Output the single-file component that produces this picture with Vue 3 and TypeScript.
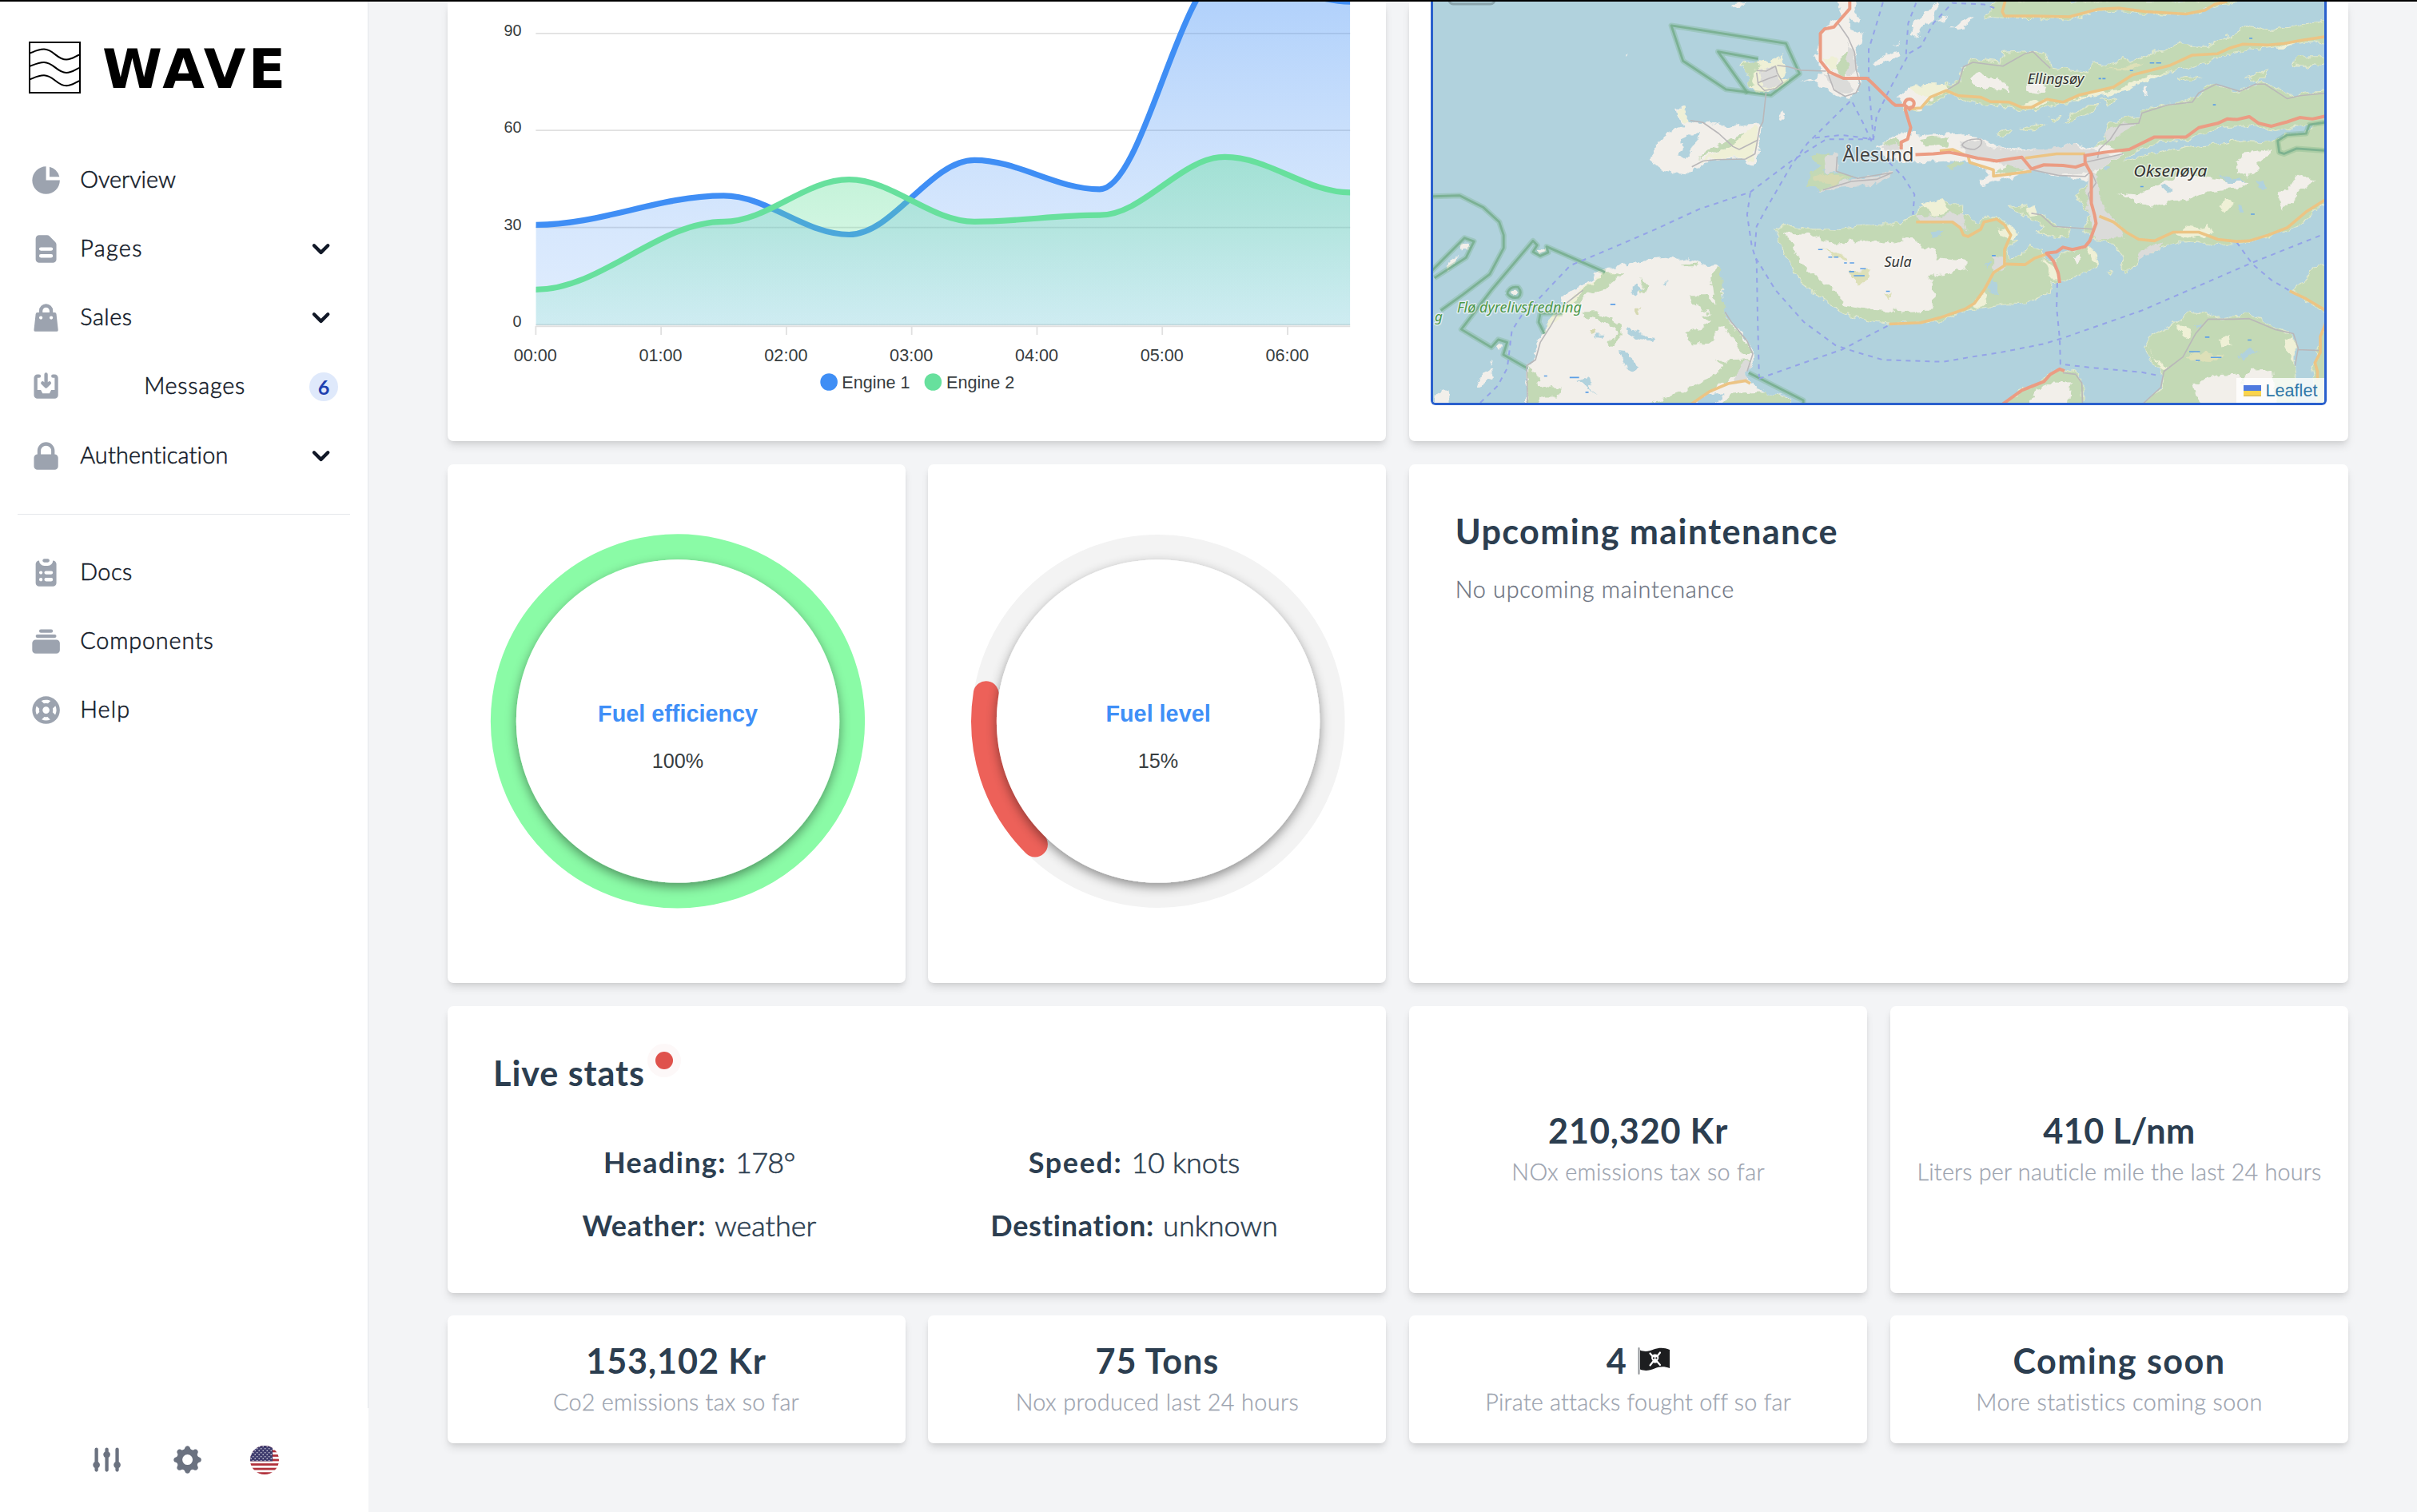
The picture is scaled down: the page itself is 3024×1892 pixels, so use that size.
<script setup lang="ts">
interface NavItem {
  label: string
  paths: string[]
  spacing: number
  chevron?: boolean
  badge?: number
}

interface Stat {
  title: string
  caption: string
  titleSpacing: number
  captionSpacing: number
  flag?: boolean
}

const chevronPath =
  'M5.293 7.293a1 1 0 011.414 0L10 10.586l3.293-3.293a1 1 0 111.414 1.414l-4 4a1 1 0 01-1.414 0l-4-4a1 1 0 010-1.414z'

const mainNav: NavItem[] = [
  {
    label: 'Overview',
    spacing: 0,
    paths: ['M2 10a8 8 0 018-8v8h8a8 8 0 11-16 0z', 'M12 2.252A8.014 8.014 0 0117.748 8H12V2.252z'],
  },
  {
    label: 'Pages',
    spacing: 1.35,
    chevron: true,
    paths: [
      'M4 4a2 2 0 012-2h4.586A2 2 0 0112 2.586L15.414 6A2 2 0 0116 7.414V16a2 2 0 01-2 2H6a2 2 0 01-2-2V4zm2 6a1 1 0 011-1h6a1 1 0 110 2H7a1 1 0 01-1-1zm1 3a1 1 0 100 2h6a1 1 0 100-2H7z',
    ],
  },
  {
    label: 'Sales',
    spacing: 0.5,
    chevron: true,
    paths: [
      'M10 2a4 4 0 00-4 4v1H5a1 1 0 00-.994.89l-1 9A1 1 0 004 18h12a1 1 0 00.994-1.11l-1-9A1 1 0 0015 7h-1V6a4 4 0 00-4-4zm2 5V6a2 2 0 10-4 0v1h4zm-6 3a1 1 0 112 0 1 1 0 01-2 0zm7-1a1 1 0 100 2 1 1 0 000-2z',
    ],
  },
  {
    label: 'Messages',
    spacing: 0.75,
    badge: 6,
    paths: [
      'M8.707 7.293a1 1 0 00-1.414 1.414l2 2a1 1 0 001.414 0l2-2a1 1 0 00-1.414-1.414L11 7.586V3a1 1 0 10-2 0v4.586l-.293-.293z',
      'M3 5a2 2 0 012-2h1a1 1 0 010 2H5v7h2l1 2h4l1-2h2V5h-1a1 1 0 110-2h1a2 2 0 012 2v10a2 2 0 01-2 2H5a2 2 0 01-2-2V5z',
    ],
  },
  {
    label: 'Authentication',
    spacing: 0.2,
    chevron: true,
    paths: ['M5 9V7a5 5 0 0110 0v2a2 2 0 012 2v5a2 2 0 01-2 2H5a2 2 0 01-2-2v-5a2 2 0 012-2zm8-2v2H7V7a3 3 0 016 0z'],
  },
]

const secondaryNav: NavItem[] = [
  {
    label: 'Docs',
    spacing: 0.5,
    paths: [
      'M9 2a1 1 0 000 2h2a1 1 0 100-2H9z',
      'M4 5a2 2 0 012-2 3 3 0 003 3h2a3 3 0 003-3 2 2 0 012 2v11a2 2 0 01-2 2H6a2 2 0 01-2-2V5zm3 4a1 1 0 000 2h.01a1 1 0 100-2H7zm3 0a1 1 0 000 2h3a1 1 0 100-2h-3zm-3 4a1 1 0 100 2h.01a1 1 0 100-2H7zm3 0a1 1 0 100 2h3a1 1 0 100-2h-3z',
    ],
  },
  {
    label: 'Components',
    spacing: 0.85,
    paths: [
      'M7 3a1 1 0 000 2h6a1 1 0 100-2H7zM4 7a1 1 0 011-1h10a1 1 0 110 2H5a1 1 0 01-1-1zM2 11a2 2 0 012-2h12a2 2 0 012 2v4a2 2 0 01-2 2H4a2 2 0 01-2-2v-4z',
    ],
  },
  {
    label: 'Help',
    spacing: 1.1,
    paths: [
      'M18 10a8 8 0 11-16 0 8 8 0 0116 0zm-2 0c0 .993-.241 1.929-.668 2.754l-1.524-1.525a3.997 3.997 0 00.078-2.183l1.562-1.562C15.802 8.249 16 9.1 16 10zm-5.165 3.913l1.58 1.58A5.98 5.98 0 0110 16a5.976 5.976 0 01-2.516-.552l1.562-1.562a4.006 4.006 0 001.789.027zm-4.677-2.796a4.002 4.002 0 01-.041-2.08l-.08.08-1.53-1.533A5.98 5.98 0 004 10c0 .954.223 1.856.619 2.657l1.54-1.54zm1.088-6.45A5.974 5.974 0 0110 4c.954 0 1.856.223 2.657.619l-1.54 1.54a4.002 4.002 0 00-2.346.033L7.246 4.668zM12 10a2 2 0 11-4 0 2 2 0 014 0z',
    ],
  },
]

const slidersPath =
  'M5 4a1 1 0 00-2 0v7.268a2 2 0 000 3.464V16a1 1 0 102 0v-1.268a2 2 0 000-3.464V4zM11 4a1 1 0 10-2 0v1.268a2 2 0 000 3.464V16a1 1 0 102 0V8.732a2 2 0 000-3.464V4zM16 3a1 1 0 011 1v7.268a2 2 0 010 3.464V16a1 1 0 11-2 0v-1.268a2 2 0 010-3.464V4a1 1 0 011-1z'
const cogPath =
  'M11.49 3.17c-.38-1.56-2.6-1.56-2.98 0a1.532 1.532 0 01-2.286.948c-1.372-.836-2.942.734-2.106 2.106.54.886.061 2.042-.947 2.287-1.561.379-1.561 2.6 0 2.978a1.532 1.532 0 01.947 2.287c-.836 1.372.734 2.942 2.106 2.106a1.532 1.532 0 012.287.947c.379 1.561 2.6 1.561 2.978 0a1.533 1.533 0 012.287-.947c1.372.836 2.942-.734 2.106-2.106a1.533 1.533 0 01.947-2.287c1.561-.379 1.561-2.6 0-2.978a1.532 1.532 0 01-.947-2.287c.836-1.372-.734-2.942-2.106-2.106a1.532 1.532 0 01-2.287-.947zM10 13a3 3 0 100-6 3 3 0 000 6z'

// Engine chart
const hour = 156.7
const originX = 669.8
const originY = 406.8
const unit = 4.047
const hours = [0, 1.5, 2.5, 3.5, 4.5, 5.5, 6.5]
const engine1 = [31, 40, 28, 51, 42, 109, 100]
const engine2 = [11, 32, 45, 32, 34, 52, 41]

function linePath(values: number[]): string {
  const pts = values.map((v, i) => [originX + hours[i] * hour, originY - v * unit])
  let d = `M${pts[0][0]} ${pts[0][1]}`
  for (let i = 1; i < pts.length; i++) {
    const [px, py] = pts[i - 1]
    const [x, y] = pts[i]
    const reach = (x - px) * 0.35
    d += ` C${px + reach} ${py} ${x - reach} ${y} ${x} ${y}`
  }
  return d
}

function areaPath(values: number[]): string {
  return `${linePath(values)} L${originX + 6.5 * hour} ${originY} L${originX} ${originY}Z`
}

const yTicks = [
  { value: 90, y: 41.8 },
  { value: 60, y: 163.2 },
  { value: 30, y: 284.7 },
  { value: 0, y: 406.4 },
]
const xTicks = [0, 1, 2, 3, 4, 5, 6].map((h) => ({ label: `0${h}:00`, x: originX + h * hour }))

// Radial gauges
const gauges = [
  { id: 'efficiency', label: 'Fuel efficiency', value: 100, color: '#8afba6', track: '#f2f2f2' },
  { id: 'level', label: 'Fuel level', value: 15, color: '#ed6159', track: '#f3f3f3' },
]
const gaugeCx = 288
const gaugeCy = 321.4
const gaugeR = 218

function gaugeArc(value: number): string {
  const at = (deg: number) => {
    const a = (deg * Math.PI) / 180
    return [gaugeCx + gaugeR * Math.sin(a), gaugeCy - gaugeR * Math.cos(a)]
  }
  const [x1, y1] = at(225)
  const [x2, y2] = at(225 + Math.min(value, 99.99) * 3.6)
  return `M${x1} ${y1} A${gaugeR} ${gaugeR} 0 ${value > 50 ? 1 : 0} 1 ${x2} ${y2}`
}

const live = [
  { name: 'Heading:', value: '178°', ns: 1.4, vs: -0.7 },
  { name: 'Speed:', value: '10 knots', ns: 1.6, vs: 0 },
  { name: 'Weather:', value: 'weather', ns: 0.8, vs: 0 },
  { name: 'Destination:', value: 'unknown', ns: 0.75, vs: 0 },
]

const stats: Stat[] = [
  { title: '210,320 Kr', caption: 'NOx emissions tax so far', titleSpacing: 0.85, captionSpacing: 0.37 },
  { title: '410 L/nm', caption: 'Liters per nauticle mile the last 24 hours', titleSpacing: 0.35, captionSpacing: 0.2 },
  { title: '153,102 Kr', caption: 'Co2 emissions tax so far', titleSpacing: 0.9, captionSpacing: 0.24 },
  { title: '75 Tons', caption: 'Nox produced last 24 hours', titleSpacing: 0.9, captionSpacing: 0.38 },
  { title: '4', caption: 'Pirate attacks fought off so far', titleSpacing: 0, captionSpacing: 0.22, flag: true },
  { title: 'Coming soon', caption: 'More statistics coming soon', titleSpacing: 1.4, captionSpacing: 0.47 },
]

// Map layers, west half
const westLand = [
  'M738 550L760 520 770 490 800 460 820 445 850 435 828 400 825 372 852 370 855 395 870 415 900 425 930 418 960 430 1000 437 1050 428 1090 425 1098 440 1092 480 1085 530 1065 575 1055 570 1040 545 1000 548 950 550 920 562 890 580 865 597 810 590 770 580Z',
  'M1330 0L1392 0 1390 40 1410 75 1400 85 1370 60 1380 100 1418 120 1410 150 1395 170 1395 230 1408 290 1395 320 1365 340 1335 330 1310 310 1285 305 1280 280 1265 270 1290 255 1280 235 1262 195 1275 190 1280 110 1300 90 1330 75 1350 55Z',
  'M345 1400L350 1340 350 1260 375 1240 385 1190 400 1150 440 1100 465 1050 460 1040 490 1000 540 975 600 925 640 918 700 905 750 890 790 886 830 895 870 890 920 915 960 910 965 960 975 1000 970 1050 985 1090 1010 1120 1040 1160 1065 1200 1065 1250 1050 1285 1060 1320 1100 1350 1180 1370 1205 1400Z',
  'M1003 12L1050 8 1035 20 1010 25Z',
  'M1150 390L1165 380 1168 395 1155 410Z',
  'M145 840L160 835 165 850 152 865Z',
  'M95 920L135 880 125 905 98 928Z',
  'M385 865L415 855 410 870 390 880Z',
  'M300 1005L315 1000 325 1010 312 1022Z',
  'M195 1330L210 1290 240 1270 245 1300 220 1320Z',
  'M230 1250L245 1245 238 1258Z',
  'M255 1190L275 1180 272 1198 258 1200Z',
  'M62 1400L66 1360 90 1340 108 1350 112 1400Z',
  'M1450 220L1480 195 1530 178 1525 195 1490 210 1460 225Z',
  'M1515 155L1535 148 1525 158Z',
  'M663 186L676 183 670 192Z',
  'M1220 280L1265 272 1250 285Z',
]
const westScrub = [
  'M1025 222L1060 215 1090 210 1125 215 1168 185 1160 210 1175 240 1165 270 1180 275 1150 305 1115 318 1085 320 1060 300 1055 260 1035 235Z',
  'M830 375L852 372 855 395 868 415 850 425 828 395Z',
  'M890 560L940 535 990 500 1050 455 1075 435 1085 440 1080 500 1060 560 1040 543 960 545Z',
  'M1290 200L1330 190 1340 240 1310 250Z',
  'M465 1050L520 1000 590 945 640 935 560 990 520 1030 470 1080 420 1130 410 1120Z',
]
const westForest = [
  'M1030 225L1080 210 1090 235 1065 255 1080 300 1060 300 1055 260Z',
  'M895 545L930 520 980 490 1040 460 1030 475 975 510 930 535Z',
  'M1350 190L1375 170 1375 230 1350 280 1335 240Z',
  'M500 1045L530 1000 600 940 660 940 640 955 590 1000 550 1010 520 1045Z',
  'M715 958L735 985 728 1010 708 1010 720 990Z',
  'M520 1075L570 1075 610 1090 650 1120 655 1160 620 1195 598 1180 640 1155 630 1125 570 1100 530 1090Z',
  'M855 1145L910 1130 940 1110 905 1095 935 1080 880 1050 865 1020 920 1020 950 1050 935 940 960 920 973 960 972 1045 985 1090 1010 1130 1055 1190 1065 1220 1040 1220 1000 1160 975 1120 950 1150 930 1185 870 1185Z',
  'M730 1400L790 1370 850 1350 930 1300 980 1265 950 1245 1060 1240 1020 1290 960 1330 880 1390Z',
  'M355 1265L385 1290 390 1330 460 1340 450 1370 400 1370 370 1400 355 1380Z',
  'M1250 540L1310 525 1325 560 1290 590 1380 600 1370 620 1290 655 1240 640 1250 600 1280 570Z',
  'M960 1400L1000 1360 1100 1350 1180 1372 1200 1400Z',
  'M840 910L890 905 890 918 850 918Z',
]
const westWater = [
  'M840 480L870 465 900 460 895 480 880 500 870 525 850 548 835 535 845 510Z',
  'M685 990L705 985 715 1000 700 1018 685 1008Z',
  'M670 1130L700 1140 730 1160 760 1165 750 1182 720 1175 680 1155Z',
  'M648 1212L665 1215 680 1235 710 1262 685 1283 668 1275 660 1245Z',
  'M515 1310L550 1298 555 1315 540 1330 575 1362 535 1335Z',
  'M900 1375L940 1355 975 1350 975 1370 940 1400 890 1400Z',
  'M570 1155L598 1157 590 1165 572 1162Z',
  'M780 975L800 973 790 983Z',
]
const westUrban = [
  'M1085 245L1110 240 1140 230 1145 260 1160 280 1125 305 1095 300Z',
  'M1370 150L1390 165 1395 240 1380 265 1365 260Z',
  'M1290 260L1320 300 1350 325 1390 310 1380 280 1320 250Z',
  'M1015 1290L1045 1245 1063 1250 1050 1285 1055 1310 1010 1315Z',
  'M1295 540L1335 530 1340 590 1300 590Z',
  'M1380 615L1450 608 1510 590 1500 615 1460 635 1270 660 1330 635Z',
]
const westHeath = [
  'M1260 610L1300 595 1365 612 1320 638 1270 630Z',
  'M695 1065L710 1065 705 1085 695 1080Z',
  'M550 1135L570 1135 572 1148 555 1155Z',
]

// Map layers, east half
const eastForest = [
  'M300 0L1060 0 1000 15 940 42 850 52 760 44 700 38 620 42 530 66 420 62 320 62 262 58Z',
  'M10 315L60 295 140 290 180 280 190 240 215 205 310 215 320 180 400 175 440 180 480 235 590 250 600 210 640 230 700 200 720 215 800 180 880 150 925 160 960 160 1040 120 1090 90 1150 105 1250 90 1350 65 1350 150 1280 145 1200 160 1100 170 1040 185 960 215 850 245 760 280 690 315 600 330 520 355 450 370 400 380 340 370 270 360 200 345 150 325 100 345 60 375 0 390Z',
  'M640 480L650 430 690 410 750 400 770 375 820 365 900 350 930 330 980 290 1070 315 1130 285 1180 300 1230 330 1350 310 1350 425 1290 430 1180 450 1100 430 1000 440 950 465 890 485 800 490 720 530 700 555 800 530 900 505 1000 495 1060 485 1130 490 1190 480 1215 460 1275 465 1300 430 1350 420 1350 690 1250 780 1200 800 1090 835 990 845 900 830 820 850 800 870 760 880 740 905 720 935 690 930 700 880 670 840 610 825 570 790 595 740 560 690 550 670 580 640 600 620 580 600 570 540Z',
  'M-403 790L-368 775 -283 790 -203 790 -143 780 -73 770 -43 772 -23 765 -10 780 10 760 40 740 50 720 120 690 190 710 190 740 240 765 290 740 330 770 350 800 340 830 370 830 330 850 340 890 380 880 400 850 440 860 440 885 480 900 500 870 530 860 590 850 610 870 622 920 570 945 500 970 470 975 465 1010 420 1030 390 1050 330 1045 250 1060 200 1070 140 1100 60 1115 -43 1115 -93 1110 -163 1090 -213 1065 -283 1010 -328 970 -353 920 -378 870 -393 820Z',
  'M750 1400L820 1340 830 1290 790 1250 765 1200 780 1160 840 1130 880 1100 910 1075 960 1080 1000 1100 1060 1090 1075 1075 1130 1100 1180 1130 1230 1150 1245 1180 1235 1250 1245 1320 1240 1400Z',
  'M1230 1000L1280 960 1300 920 1350 912 1350 1080 1300 1050Z',
  'M1350 1120L1325 1150 1310 1240 1295 1260 1310 1400 1350 1400Z',
  'M320 1400L380 1340 430 1320 460 1290 500 1270 550 1285 570 1320 572 1400Z',
  'M1235 215L1250 195 1350 195 1350 220 1320 225 1280 235Z',
  'M870 268L900 260 940 270 910 282Z',
  'M1090 270L1160 238 1150 260 1120 285Z',
  'M515 425L530 395 590 362 618 362 600 385 550 410Z',
  'M300 460L320 440 350 455 325 470Z',
  'M378 445L430 425 450 435 410 452Z',
  'M630 345L660 335 675 345 650 358Z',
  'M330 715L390 705 405 730 440 735 480 775 530 790 520 820 440 810 420 800 450 780 410 755 390 740Z',
  'M648 935L662 938 655 948Z',
  'M470 408L500 398 480 415Z',
]
const eastLand = [
  'M-80 500L0 455 80 465 160 460 240 470 300 510 400 515 480 510 540 490 600 510 640 500 700 530 640 570 610 590 600 625 500 605 420 590 380 600 300 625 250 640 240 620 280 600 220 560 150 555 60 560 0 560 -60 540Z',
  'M-15 330L20 300 60 305 110 320 60 375 10 380Z',
  'M-375 805L-300 810 -230 835 -150 830 -50 820 30 820 60 850 100 860 110 890 200 900 200 925 140 945 80 950 100 1000 90 1070 0 1075 -100 1068 -180 1050 -230 990 -300 930 -345 860Z',
  'M210 265L240 250 270 270 300 270 340 300 330 312 270 300 230 300Z',
  'M390 290L460 300 450 320 400 315Z',
  'M680 665L740 670 800 640 880 600 960 610 1030 620 1095 625 1080 645 970 660 900 690 860 695 800 712 750 700Z',
  'M1055 560L1080 525 1165 515 1165 530 1120 560 1125 590 1090 610 1060 590Z',
  'M1185 665L1220 650 1250 600 1305 625 1250 660 1240 690 1200 730Z',
  'M920 1320L1000 1295 1060 1290 1080 1320 1100 1275 1170 1270 1180 1400 940 1400Z',
  'M400 1400L420 1345 480 1315 530 1318 525 1400Z',
  'M25 125L35 80 80 40 105 8 110 25 95 70 60 100 45 125Z',
  'M155 100L190 75 225 55 215 80 180 100Z',
  'M100 80L130 60 150 50 130 70Z',
  'M762 310L775 300 780 325 765 332Z',
  'M540 890L560 870 570 890 550 915Z',
]
const eastScrub = [
  'M20 300L80 290 140 290 150 310 100 335 50 330Z',
  'M370 365L450 338 470 350 400 375Z',
  'M520 348L600 322 690 305 760 270 850 240 820 255 700 318 600 335Z',
  'M860 810L920 770 950 790 970 770 985 810 920 820Z',
  'M1000 715L1030 685 1050 700 1020 735Z',
  'M440 890L480 920 495 960 470 960Z',
  'M585 850L605 860 622 915 600 900Z',
  'M220 1050L260 1010 265 1040 240 1060Z',
  'M865 1120L900 1125 915 1165 900 1175Z',
  'M770 1180L790 1220 840 1270 820 1275Z',
  'M1000 1165L1035 1155 1040 1185 1015 1200Z',
  'M1180 165L1240 138 1250 145 1210 165Z',
  'M300 790L340 780 365 800 340 830Z',
  'M390 720L420 710 430 740 400 745Z',
  'M1210 1170L1240 1165 1240 1250 1215 1200Z',
  'M60 700L130 690 150 730 90 740Z',
]
const eastUrban = [
  'M180 490L250 480 270 510 380 520 500 505 540 490 570 510 600 515 690 535 640 570 600 590 500 600 400 590 300 560 210 545Z',
  'M590 590L620 610 625 680 650 740 690 780 700 820 610 825 600 770 580 690Z',
  'M640 460L690 425 740 430 690 460 660 490Z',
  'M740 880L780 850 825 835 810 865 750 895Z',
  'M40 745L120 740 190 735 200 790 170 770 60 765Z',
  'M560 530L620 545 610 580 560 570Z',
  'M290 880L330 900 320 930 290 940Z',
  'M-70 500L-20 490 0 510 -30 540Z',
]
const eastInnerForest = [
  'M50 480L100 470 150 480 140 500 70 505Z',
  'M290 590L340 565 430 560 410 580 340 600Z',
  'M-60 490L-20 475 0 500 -30 505Z',
  'M140 570L170 555 190 570 160 580Z',
  'M-240 820L-180 825 -120 790 -60 780 -10 790 0 830 -50 840 -150 825 -220 832Z',
]
const eastWater = [
  'M820 640L835 635 850 650 840 660Z',
  'M1000 605L1040 610 1095 628 1040 628Z',
  'M1120 625L1145 620 1150 650 1130 652Z',
  'M1060 710L1080 710 1085 735 1068 735Z',
  'M280 960L300 970 300 1010 275 1010Z',
  'M635 570L660 575 650 590 635 582Z',
  'M925 1120L950 1110 940 1130 925 1130Z',
  'M1065 1225L1100 1200 1140 1215 1110 1215 1080 1235Z',
  'M85 800L130 795 120 815 95 820Z',
  'M260 900L275 905 270 925Z',
]
const ferries = [
  'M205 1388L260 1330 290 1270 295 1230 305 1140 340 1080 390 1030 490 915 600 865 750 795 900 720 1060 662 1190 555 1300 480 1450 480',
  'M1060 665L1050 740 1065 850 1080 900 1083 1080 1088 1300',
  'M1075 850L1080 780 1110 720 1190 570 1240 495 1380 345 1420 430 1445 490',
  'M1078 890L1140 1000 1230 1110 1330 1190 1400 1215 1480 1240 1670 1247 1760 1230 1850 1215 1990 1185 2050 1165 2300 1070 2650 905 2880 805',
  'M1088 1305L1230 1250 1350 1205 1500 1120',
  'M1265 475L1350 465 1450 480 1460 400 1500 310 1540 230 1560 190',
  'M1480 8L1455 100 1435 170 1435 290 1450 480',
  'M1585 10L1560 80 1553 190 1600 160 1640 80 1700 10 1800 15 1840 30',
  'M1500 560L1545 610 1580 670 1575 740',
  'M2032 975L2030 1060 2040 1170 2042 1255 2150 1268 2300 1283 2355 1295',
  'M2600 835L2650 910 2710 965 2765 1000',
]
const redRoads = [
  'M1375 0L1375 30 1335 80 1325 93 1295 100 1282 115 1282 210 1310 248 1355 270 1430 270 1445 285 1510 355 1520 363 1550 363 1568 380',
  'M1550 375L1568 440 1558 480 1538 490 1538 515',
  'M1548 360Q1550 340 1568 342 1585 350 1575 368 1560 375 1548 368',
  'M1583 533L1640 530 1690 525 1740 535 1780 545 1840 555 1880 548 1920 542 1950 582 1990 568 2050 570 2090 576 2120 565 2120 538',
  'M2115 537L2180 525 2260 515 2340 472 2440 472 2480 440 2540 425 2570 410 2600 412 2640 402 2670 425 2710 435 2760 420 2800 405 2840 410 2890 398',
  'M2120 560L2140 600 2140 700 2150 740 2155 770 2135 830 2120 850 2080 860 2050 852 2030 868 1998 872 2020 900 2035 940 2040 975',
  'M1850 1400L1920 1345 1990 1315 2010 1290 2040 1272 2055 1278',
]
const orangeRoads = [
  'M1868 0L1858 40 1865 55 1960 55 2070 58 2160 32 2230 28 2310 40 2440 48 2500 35 2530 15 2570 5',
  'M1568 375L1600 372 1630 335 1680 312 1720 330 1790 335 1820 350 1880 352 1920 370 1950 370 2000 342 2050 352 2100 328 2210 300 2270 258 2390 225 2460 190 2540 185 2580 165 2620 152 2700 155 2750 150 2800 140 2890 125',
  'M1740 535L1700 515 1660 520',
  'M1750 540L1755 560 1830 585 1830 607 1950 590',
  'M1930 545L2030 530 2120 530',
  'M1585 765L1700 765 1725 785 1735 810 1750 815 1790 790 1800 765 1840 755 1865 775 1885 810 1865 860 1865 915 1830 940 1800 1000 1770 1045 1740 1065 1660 1095 1600 1112 1500 1117',
  'M1865 910L1930 912 1960 890 2000 875',
  'M2165 745L2210 765 2250 800 2290 825 2340 830 2400 800 2480 800 2540 825 2600 832 2640 830 2700 810 2760 785 2820 730 2890 682',
  'M2768 1003L2820 1030 2890 1075 2880 1120 2865 1160 2865 1215 2848 1250 2856 1280 2856 1310',
  'M870 1395L930 1350 990 1322 1045 1312 1060 1322',
]
const greyRoads = [
  'M870 415L910 422 960 460 1005 505 1025 515 1085 482',
  'M875 575L910 555 950 550 1045 548 1075 530 1090 440 1100 420 1110 320',
  'M1080 250L1085 290 1105 312 1140 305 1163 285 1145 250 1140 228 1110 245 1080 243 M1085 285L1120 270 1145 260 M1145 225L1180 230 1220 242 1300 245',
  'M1335 75L1370 130 1390 180 1395 240 1408 290 1395 320 1360 332 1325 310 1305 250',
  'M355 1395L352 1260 380 1240 395 1180 430 1120 460 1060 530 1000',
  'M980 1075L1000 1110 1050 1175 1068 1220 1050 1280',
  'M1335 540L1332 590 1400 615 1450 605 1510 595 1460 618 1380 625 1290 655',
  'M1683 310L1720 285 1735 230 1765 215 1860 228 1930 185 1955 178 1985 210 2010 235',
  'M2160 545L2165 515 2200 480 2230 430 2290 425 2300 390 2380 362 2460 352 2480 320 2535 290 2610 315 2660 290 2690 290 2760 340 2800 330 2890 320',
  'M2120 560L2240 530 M1950 585L2040 605 2120 608 2140 590 2155 630 2130 670 2150 735',
  'M1950 735L1980 740 2020 780 2080 785 2150 790',
  'M2300 1395L2360 1335 2370 1280 2430 1230 2470 1150 2510 1100 2590 1100 2640 1098 2720 1135 2780 1150 2795 1200 2785 1260 M2795 1205L2865 1208',
  'M2050 1285L2090 1290 2110 1320 2112 1395',
  'M1730 500Q1745 475 1790 480 1800 500 1770 515 1740 515 1730 500',
]
const reserves = [
  'M810 88L1173 150 1216 254 1125 328 983 308 847 210Z',
  'M1085 203L958 178 1052 322',
  'M50 677L140 674 215 715 265 765 279 810 279 855 235 945 150 1015 80 1070',
  'M50 935L100 880 155 820 185 832 160 888 60 958',
  'M600 938L415 850 420 870 395 882 372 868 385 845 372 830 240 1000 145 1135 240 1197 262 1170 290 1180 278 1222 355 1270',
  'M290 1010Q300 985 325 990 340 1010 325 1025 300 1030 290 1010',
  'M465 1080L395 1080 390 1110 408 1150',
  'M1055 1285L1228 1380 1228 1400',
  'M2890 420L2830 430 2820 460 2760 465 2730 485 2735 525 2750 530 2790 512 2890 520',
]
const streams = [
  'M1275 860h14M1307 886h12M1325 886h14M1357 906h9M1375 906h14M1373 936h16M1408 926h18M1388 950h34M617 1049h16M488 1301h30M407 1296h10M538 1352h10M1490 1004h12',
  'M2325 217h14M2345 217h16M2163 271h8M2175 271h10M2262 243h10M2450 1212h34M2470 1242h14M2518 1232h34M2500 1162h14M2635 1172h12M2525 361h9M2640 132h10M1825 881h12M2295 643h10M2645 738h12',
]
</script>

<template>
  <div class="page">
    <div class="topline"></div>
    <div class="layout">
      <aside class="sidebar">
        <div class="menu">
          <a class="brand">
            <svg class="brand-mark" viewBox="0 0 65 65">
              <rect x="1" y="1" width="63" height="63" fill="none" stroke="#000" stroke-width="2" />
              <g fill="none" stroke="#000" stroke-width="2">
                <path d="M1 14.9C8 12 12 9.6 19 9.6C31 9.6 35 22.6 47 22.6C54 22.6 58 18.5 64 16.3" />
                <path d="M1 31.2C8 28.3 12 25.9 19 25.9C31 25.9 35 38.9 47 38.9C54 38.9 58 34.8 64 32.6" />
                <path d="M1 47.6C8 44.7 12 42.3 19 42.3C31 42.3 35 55.3 47 55.3C54 55.3 58 51.2 64 49" />
              </g>
            </svg>
            <span class="brand-name">WAVE</span>
          </a>

          <ul class="nav">
            <li v-for="item in mainNav" :key="item.label" class="nav-item">
              <svg class="icon" viewBox="0 0 20 20">
                <path v-for="p in item.paths" :key="p" :d="p" fill-rule="evenodd" clip-rule="evenodd" />
              </svg>
              <span
                class="nav-label"
                :class="{ centered: item.badge }"
                :style="{ letterSpacing: item.spacing + 'px' }"
                >{{ item.label }}</span
              >
              <svg v-if="item.chevron" class="icon chevron" viewBox="0 0 20 20">
                <path :d="chevronPath" fill-rule="evenodd" />
              </svg>
              <span v-if="item.badge" class="badge">{{ item.badge }}</span>
            </li>
          </ul>
          <ul class="nav nav-secondary">
            <li v-for="item in secondaryNav" :key="item.label" class="nav-item">
              <svg class="icon" viewBox="0 0 20 20">
                <path v-for="p in item.paths" :key="p" :d="p" fill-rule="evenodd" clip-rule="evenodd" />
              </svg>
              <span class="nav-label" :style="{ letterSpacing: item.spacing + 'px' }">{{ item.label }}</span>
            </li>
          </ul>
        </div>

        <div class="tools">
          <svg class="icon tool" viewBox="0 0 20 20"><path :d="slidersPath" /></svg>
          <svg class="icon tool" viewBox="0 0 20 20"><path :d="cogPath" fill-rule="evenodd" /></svg>
          <svg class="locale" viewBox="0 0 36 36">
            <defs>
              <clipPath id="locale-clip"><circle cx="18" cy="18" r="18" /></clipPath>
              <pattern id="stars" width="5" height="5" patternUnits="userSpaceOnUse">
                <circle cx="1.2" cy="1.2" r=".8" fill="#fff" />
                <circle cx="3.7" cy="3.7" r=".8" fill="#fff" />
              </pattern>
            </defs>
            <g clip-path="url(#locale-clip)">
              <rect width="36" height="36" fill="#fff" />
              <rect v-for="n in 7" :key="n" x="0" :y="(n - 1) * 5.54" width="36" height="2.77" fill="#b0303a" />
              <rect width="28" height="19.4" fill="#3f3c6e" />
              <rect width="28" height="19.4" fill="url(#stars)" opacity=".85" />
            </g>
          </svg>
        </div>
      </aside>

      <main class="grid">
        <section class="card wide open-top">
          <svg class="fill" viewBox="559.5 2 1174.3 550" preserveAspectRatio="none">
            <defs>
              <linearGradient id="fill-blue" gradientUnits="userSpaceOnUse" x1="0" y1="-34" x2="0" y2="407">
                <stop offset="0" stop-color="#3f8ef5" stop-opacity=".43" />
                <stop offset=".45" stop-color="#3f8ef5" stop-opacity=".28" />
                <stop offset=".72" stop-color="#3f8ef5" stop-opacity=".21" />
                <stop offset="1" stop-color="#3f8ef5" stop-opacity=".16" />
              </linearGradient>
              <linearGradient id="fill-green" gradientUnits="userSpaceOnUse" x1="0" y1="196" x2="0" y2="407">
                <stop offset="0" stop-color="#67e09d" stop-opacity=".42" />
                <stop offset=".42" stop-color="#67e09d" stop-opacity=".31" />
                <stop offset="1" stop-color="#72e8b4" stop-opacity=".16" />
              </linearGradient>
              <clipPath id="plot"><rect x="669.8" y="0" width="1018.4" height="420" /></clipPath>
            </defs>
            <g stroke="#e0e0e0" stroke-width="1.8">
              <line v-for="t in yTicks" :key="t.value" x1="669.8" x2="1688.2" :y1="t.y" :y2="t.y" />
              <line x1="669.8" x2="1688.2" y1="408.4" y2="408.4" />
              <line v-for="t in xTicks" :key="t.label" :x1="t.x" :x2="t.x" y1="408" y2="419" />
            </g>
            <g clip-path="url(#plot)" fill="none" stroke-width="7.2">
              <path :d="areaPath(engine1)" fill="url(#fill-blue)" />
              <path :d="linePath(engine1)" stroke="#3f8ef5" />
              <path :d="areaPath(engine2)" fill="url(#fill-green)" />
              <path :d="linePath(engine2)" stroke="#67e09d" />
            </g>
            <g class="axis y-axis">
              <text v-for="t in yTicks" :key="t.value" x="652" :y="t.y + 3">{{ t.value }}</text>
            </g>
            <g class="axis x-axis">
              <text v-for="t in xTicks" :key="t.label" :x="t.x - 0.5" y="452">{{ t.label }}</text>
            </g>
            <g class="axis legend">
              <circle cx="1036.4" cy="478" r="10.8" fill="#3f8ef5" />
              <text x="1052.5" y="485.6">Engine 1</text>
              <circle cx="1166.6" cy="478" r="10.8" fill="#67e09d" />
              <text x="1183.2" y="485.6">Engine 2</text>
            </g>
          </svg>
        </section>

        <section class="card wide open-top map-card">
          <div class="map">
            <svg class="fill" viewBox="1792 2 1116.5 502.6" preserveAspectRatio="none">
              <defs>
                <filter id="coast" x="-5%" y="-5%" width="110%" height="110%">
                  <feTurbulence type="fractalNoise" baseFrequency=".09" numOctaves="3" seed="4" />
                  <feDisplacementMap in="SourceGraphic" scale="11" xChannelSelector="R" yChannelSelector="G" />
                </filter>
              </defs>
              <rect x="1780" y="0" width="1140" height="520" fill="#b1d2dd" />
              <g filter="url(#coast)">
                <g transform="translate(1770 0) scale(.39541 .36352)">
                  <path v-for="d in westLand" :key="d" :d="d" fill="#f2efea" />
                  <path v-for="d in westScrub" :key="d" :d="d" fill="#eff0d6" />
                  <path v-for="d in westForest" :key="d" :d="d" fill="#c3d9b5" />
                  <path v-for="d in westUrban" :key="d" :d="d" fill="#dbdbd9" />
                  <path v-for="d in westHeath" :key="d" :d="d" fill="#d6d9b2" />
                  <path v-for="d in westWater" :key="d" :d="d" fill="#b1d2dd" />
                </g>
                <g transform="translate(2380 0) scale(.39541 .36352)">
                  <g stroke="#e2e9cd" stroke-width="3">
                    <path v-for="d in eastForest" :key="d" :d="d" fill="#c3d9b5" />
                  </g>
                  <path v-for="d in eastLand" :key="d" :d="d" fill="#f2efea" />
                  <path v-for="d in eastInnerForest" :key="d" :d="d" fill="#c3d9b5" />
                  <path v-for="d in eastScrub" :key="d" :d="d" fill="#eff0d6" />
                  <path v-for="d in eastUrban" :key="d" :d="d" fill="#dbdbd9" />
                  <path v-for="d in eastWater" :key="d" :d="d" fill="#b1d2dd" />
                  <path
                    d="M-260 855L-230 870 -180 885 -170 900 -230 880ZM-170 935L-100 930 -110 960 -140 985 -155 960ZM-55 1005L-35 1010 -45 1030ZM900 1240L920 1215 1020 1225 970 1245ZM640 240L720 225 760 222 740 240Z"
                    fill="#dde0b8"
                  />
                </g>
              </g>
              <g class="lines" transform="translate(1770 0) scale(.39541 .36352)">
                <path v-for="d in reserves" :key="d + 'w'" :d="d" stroke="#6fb07f" stroke-opacity=".3" stroke-width="7" />
                <path v-for="d in reserves" :key="d" :d="d" stroke="#75ad8c" stroke-opacity=".85" stroke-width="2.8" />
                <path v-for="d in ferries" :key="d" :d="d" stroke="#94a3e8" stroke-width="2" stroke-dasharray="6 6" />
                <path v-for="d in greyRoads" :key="d" :d="d" stroke="#b9b7b9" stroke-width="1.6" />
                <path v-for="d in orangeRoads" :key="d" :d="d" stroke="#ecc484" stroke-width="3.6" />
                <path v-for="d in redRoads" :key="d" :d="d" stroke="#eb9c83" stroke-width="4" />
                <path v-for="d in streams" :key="d" :d="d" stroke="#5c9fe6" stroke-width="1.6" />
              </g>
              <g class="places">
                <text x="2305" y="202" font-size="23.5" textLength="89" lengthAdjust="spacingAndGlyphs" class="town">Ålesund</text>
                <text x="2536" y="105" font-size="18" textLength="71" lengthAdjust="spacingAndGlyphs">Ellingsøy</text>
                <text x="2669" y="221" font-size="20.5" textLength="92" lengthAdjust="spacingAndGlyphs">Oksenøya</text>
                <text x="2357" y="334.5" font-size="17.5" textLength="34" lengthAdjust="spacingAndGlyphs">Sula</text>
                <text x="1822" y="391.5" font-size="17.5" textLength="156" lengthAdjust="spacingAndGlyphs" class="reserve">Flø dyrelivsfredning</text>
                <text x="1794" y="402" font-size="17" class="reserve">g</text>
              </g>
              <rect x="1812" y="-20" width="57" height="25" rx="5" fill="none" stroke="#000" stroke-opacity=".22" stroke-width="3" />
            </svg>
            <a class="attribution">
              <svg class="ua" viewBox="0 0 12 8" preserveAspectRatio="none">
                <path fill="#4f7adf" d="M0 0h12v4H0z" />
                <path fill="#fbd44b" d="M0 4h12v3H0z" />
                <path fill="#dfbb45" d="M0 7h12v1H0z" />
              </svg>
              <span>Leaflet</span>
            </a>
          </div>
        </section>

        <section v-for="g in gauges" :key="g.id" class="card">
          <svg class="fill" viewBox="0 0 572.9 649.2">
            <defs>
              <filter :id="'shade-' + g.id" x="-20%" y="-20%" width="140%" height="140%">
                <feDropShadow dx="0" dy="5" stdDeviation="7" flood-color="#000" flood-opacity=".42" />
              </filter>
            </defs>
            <circle :cx="gaugeCx" :cy="gaugeCy" :r="gaugeR" fill="none" :stroke="g.track" stroke-width="31" />
            <path :d="gaugeArc(g.value)" fill="none" :stroke="g.color" stroke-width="32" stroke-linecap="round" />
            <circle :cx="gaugeCx" :cy="gaugeCy" r="202.2" fill="#fff" :filter="`url(#shade-${g.id})`" />
            <text class="gauge-name" :x="gaugeCx" y="322">{{ g.label }}</text>
            <text class="gauge-value" :x="gaugeCx" y="380">{{ g.value }}%</text>
          </svg>
        </section>

        <section class="card wide panel">
          <h2 class="heading upcoming">Upcoming maintenance</h2>
          <p class="note">No upcoming maintenance</p>
        </section>

        <section class="card wide panel">
          <div class="live-head">
            <h2 class="heading">Live stats</h2>
            <span class="pulse"></span>
          </div>
          <div class="live-grid">
            <p v-for="l in live" :key="l.name" class="live-row">
              <strong :style="{ letterSpacing: l.ns + 'px' }">{{ l.name }}</strong>
              <span :style="{ letterSpacing: l.vs + 'px' }">{{ l.value }}</span>
            </p>
          </div>
        </section>

        <section v-for="s in stats" :key="s.title" class="card stat">
          <h2 class="stat-title" :style="{ letterSpacing: s.titleSpacing + 'px' }">
            {{ s.title }}
            <svg v-if="s.flag" class="pirate" viewBox="0 0 41 34">
              <path d="M1.5 1v32" stroke="#8b8f94" stroke-width="2" stroke-linecap="round" />
              <path d="M3 3.5C9 6 14 5 20 2.5C27 .2 33 0 40 3V26C33 23.5 27 24 21 26.5C15 29 9 30 3 27.5Z" fill="#1d1e20" />
              <path d="M15.500 7.500L28 22M28 6.500L15.500 22.500" stroke="#fff" stroke-width="2.2" stroke-linecap="round" />
              <circle cx="21.7" cy="13" r="4.6" fill="#fff" />
              <rect x="19.4" y="15.500" width="4.6" height="4" rx="1" fill="#fff" />
              <circle cx="20" cy="13.4" r="1.1" fill="#1d1e20" />
              <circle cx="23.4" cy="13.4" r="1.1" fill="#1d1e20" />
            </svg>
          </h2>
          <p class="stat-caption" :style="{ letterSpacing: s.captionSpacing + 'px' }">{{ s.caption }}</p>
        </section>
      </main>
    </div>
  </div>
</template>

<style>
body {
  background: #f3f4f6;
}
</style>

<style scoped>
.page {
  display: flex;
  flex-direction: column;
  width: 3024px;
  height: 1892px;
  overflow: hidden;
  background: #f3f4f6;
  font-family: Lato, 'Liberation Sans', sans-serif;
  color: #2c3e50;
}
h2,
p,
ul {
  margin: 0;
  padding: 0;
}
.topline {
  flex: none;
  height: 2px;
  background: #000;
}
.layout {
  display: flex;
  flex: 1;
  min-height: 0;
}

/* Sidebar */
.sidebar {
  display: flex;
  flex-direction: column;
  flex: none;
  width: 461px;
  background: #fff;
}
.menu {
  flex: 1;
  box-sizing: border-box;
  border-right: 1px solid #e5e7eb;
  padding: 50px 22px 0;
}
.brand {
  display: flex;
  align-items: flex-start;
  gap: 27px;
  height: 65px;
  padding-left: 14px;
}
.brand-mark {
  flex: none;
  width: 65px;
  height: 65px;
}
.brand-name {
  margin-top: 2px;
  font: 700 68px/65px 'DejaVu Sans', sans-serif;
  letter-spacing: 3.4px;
  color: #000;
}
.nav {
  display: flex;
  flex-direction: column;
  gap: 14.2px;
  margin-top: 72.5px;
  list-style: none;
}
.nav-secondary {
  margin-top: 37px;
  padding-top: 36px;
  border-top: 1px solid #e5e7eb;
}
.nav-item {
  display: flex;
  align-items: center;
  height: 72px;
  padding: 0 15px 0 14px;
}
.icon {
  flex: none;
  width: 43.2px;
  height: 43.2px;
  fill: #9ca3af;
}
.nav-label {
  flex: 1;
  margin-left: 21px;
  padding-bottom: 2px;
  font-size: 28.8px;
  font-weight: 300;
  line-height: 43.2px;
  color: #111827;
  -webkit-text-stroke: 0.55px currentColor;
}
.centered {
  text-align: center;
}
.chevron {
  fill: #111827;
}
.badge {
  display: flex;
  align-items: center;
  justify-content: center;
  width: 36px;
  height: 36px;
  border-radius: 50%;
  background: #dfe9fb;
  color: #1e40af;
  font-size: 25.2px;
  font-weight: 700;
}
.tools {
  display: flex;
  align-items: center;
  justify-content: center;
  gap: 57.4px;
  flex: none;
  height: 130px;
}
.tool {
  fill: #6b7280;
}
.locale {
  width: 36px;
  height: 36px;
}

/* Dashboard grid */
.grid {
  display: grid;
  grid-template-columns: repeat(4, 1fr);
  grid-template-rows: 550px 649.2px 358.8px 159.4px;
  gap: 28.8px;
  flex: 1;
  padding: 0 86px 0 98.5px;
}
.card {
  min-width: 0;
  border-radius: 7.2px;
  background: #fff;
  box-shadow:
    0 7.2px 10.8px -1.8px rgba(0, 0, 0, 0.1),
    0 3.6px 7.2px -3.6px rgba(0, 0, 0, 0.12);
}
.wide {
  grid-column: span 2;
}
.open-top {
  border-top-left-radius: 0;
  border-top-right-radius: 0;
}
.fill {
  display: block;
  width: 100%;
  height: 100%;
}
.axis text {
  font-family: 'Liberation Sans', sans-serif;
  font-size: 21.6px;
  fill: #373d3f;
}
.y-axis text {
  font-size: 19.8px;
  text-anchor: end;
}
.x-axis text {
  text-anchor: middle;
}

/* Map */
.map-card {
  box-sizing: border-box;
  padding: 0 26.6px 45px;
}
.map {
  position: relative;
  box-sizing: border-box;
  height: 505px;
  border: 3px solid #2a60cd;
  border-top: 0;
  border-radius: 0 0 6px 6px;
  overflow: hidden;
}
.lines path {
  fill: none;
  stroke-linejoin: round;
  vector-effect: non-scaling-stroke;
}
.places text {
  font-family: 'Noto Sans', sans-serif;
  font-style: italic;
  fill: #333;
  stroke: rgba(255, 255, 255, 0.6);
  stroke-width: 3px;
  stroke-linejoin: round;
  paint-order: stroke;
}
.places .town {
  font-style: normal;
  fill: #444;
}
.places .reserve {
  fill: #4c9748;
}
.attribution {
  position: absolute;
  right: 0;
  bottom: 0;
  display: flex;
  align-items: center;
  gap: 6px;
  height: 31px;
  padding: 0 9px;
  background: rgba(255, 255, 255, 0.8);
  font: 21.6px/31px 'Liberation Sans', sans-serif;
  color: #2f77a8;
}
.ua {
  width: 22px;
  height: 14px;
}

/* Gauges */
.gauge-name {
  font: 700 28.8px 'Liberation Sans', sans-serif;
  fill: #3f8ff7;
  text-anchor: middle;
}
.gauge-value {
  font: 25.2px 'Liberation Sans', sans-serif;
  fill: #373d3f;
  text-anchor: middle;
}

/* Text panels */
.panel {
  padding: 55.6px 57.6px 0;
}
.heading {
  font-size: 43.2px;
  font-weight: 700;
  line-height: 57.6px;
  letter-spacing: 0.9px;
}
.upcoming {
  letter-spacing: 1.35px;
}
.note {
  margin-top: 22px;
  font-size: 28.8px;
  font-weight: 300;
  line-height: 43.2px;
  letter-spacing: 0.74px;
  color: #6b7280;
  -webkit-text-stroke: 0.3px currentColor;
}
.live-head {
  display: flex;
  align-items: flex-start;
}
.pulse {
  width: 22px;
  height: 22px;
  margin: 2px 0 0 13px;
  border-radius: 50%;
  background: #df524c;
  box-shadow: 0 0 0 10px #fdf8f8;
}
.live-grid {
  display: grid;
  grid-template-columns: 1fr 1fr;
  gap: 28.6px 28.8px;
  margin-top: 57.2px;
}
.live-row {
  font-size: 36px;
  line-height: 50.4px;
  text-align: center;
}
.live-row strong {
  font-weight: 700;
}
.live-row span {
  margin-left: 11px;
  font-weight: 300;
  -webkit-text-stroke: 0.6px currentColor;
}
.stat {
  display: flex;
  flex-direction: column;
  align-items: center;
  justify-content: center;
  box-sizing: border-box;
  padding-bottom: 2.4px;
}
.stat-title {
  display: flex;
  align-items: center;
  gap: 14px;
  font-size: 43.2px;
  font-weight: 700;
  line-height: 57.6px;
  white-space: nowrap;
}
.stat-caption {
  margin-top: 1.3px;
  font-size: 28.8px;
  font-weight: 300;
  line-height: 43.2px;
  color: #9ca3af;
  white-space: nowrap;
  -webkit-text-stroke: 0.3px currentColor;
}
.pirate {
  width: 41px;
  height: 34px;
}
</style>
